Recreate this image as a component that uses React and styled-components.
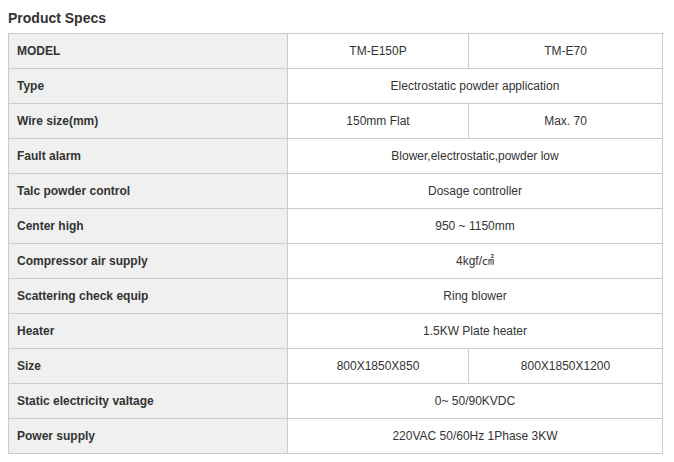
import styled, { createGlobalStyle } from 'styled-components';

const GlobalStyle = createGlobalStyle`
  body {
    margin: 8px;
    background: #fff;
    font-family: 'Liberation Sans', Arial, 'Noto Sans CJK KR', sans-serif;
    color: #333;
  }
`;

const specs = [
  { label: 'MODEL', values: ['TM-E150P', 'TM-E70'] },
  { label: 'Type', values: ['Electrostatic powder application'] },
  { label: 'Wire size(mm)', values: ['150mm Flat', 'Max. 70'] },
  { label: 'Fault alarm', values: ['Blower,electrostatic,powder low'] },
  { label: 'Talc powder control', values: ['Dosage controller'] },
  { label: 'Center high', values: ['950 ~ 1150mm'] },
  { label: 'Compressor air supply', values: ['4kgf/㎠'] },
  { label: 'Scattering check equip', values: ['Ring blower'] },
  { label: 'Heater', values: ['1.5KW Plate heater'] },
  { label: 'Size', values: ['800X1850X850', '800X1850X1200'] },
  { label: 'Static electricity valtage', values: ['0~ 50/90KVDC'] },
  { label: 'Power supply', values: ['220VAC 50/60Hz 1Phase 3KW'] },
];

function App() {
  return (
    <>
      <GlobalStyle />
      <Title>Product Specs</Title>
      <SpecTable>
        {specs.map((row) => (
          <Row key={row.label}>
            <LabelCell>{row.label}</LabelCell>
            {row.values.map((value) => (
              <ValueCell key={value} span={row.values.length === 1 ? 2 : 1}>
                {value}
              </ValueCell>
            ))}
          </Row>
        ))}
      </SpecTable>
    </>
  );
}

export default App;

const Title = styled.h2`
  margin: 2px 0 6px;
  font-size: 14px;
  font-weight: 700;
  line-height: 17px;
  color: #333;
`;

const SpecTable = styled.div`
  display: grid;
  width: 655px;
  border-top: 1px solid #ccc;
  border-left: 1px solid #ccc;
`;

const Row = styled.div`
  display: grid;
  grid-template-columns: 279px 181px 194px;
  height: 35px;
`;

const Cell = styled.div`
  display: flex;
  align-items: center;
  border-right: 1px solid #ccc;
  border-bottom: 1px solid #ccc;
  font-size: 12px;
  line-height: 14px;
  color: #333;
`;

const LabelCell = styled(Cell)`
  padding-left: 8px;
  background: #f0f0f0;
  font-weight: 700;
`;

const ValueCell = styled(Cell)`
  justify-content: center;
  grid-column: span ${(props) => props.span};
  background: #fff;
`;
